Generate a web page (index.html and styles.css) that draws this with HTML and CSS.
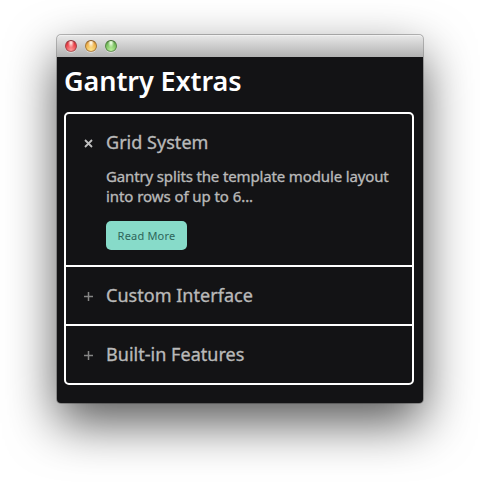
FILE: index.html
```html
<!DOCTYPE html>
<html lang="en">
<head>
<meta charset="utf-8">
<title>Gantry Extras</title>
<link rel="stylesheet" href="styles.css">
</head>
<body>
<main class="window">
  <header class="titlebar">
    <span class="light red"></span>
    <span class="light amber"></span>
    <span class="light green"></span>
  </header>
  <section class="content">
    <h1 class="title">Gantry Extras</h1>
    <div class="accordion">
      <article class="item open">
        <svg class="icon" viewBox="0 0 11 11"><path d="M2 2 9 9M9 2 2 9"/></svg>
        <div class="body">
          <h2 class="heading">Grid System</h2>
          <p class="text">Gantry splits the template module layout<br>into rows of up to 6...</p>
          <a class="button">Read More</a>
        </div>
      </article>
      <article class="item">
        <svg class="icon" viewBox="0 0 11 11"><path d="M5.5 1V10M1 5.5H10"/></svg>
        <h2 class="heading">Custom Interface</h2>
      </article>
      <article class="item">
        <svg class="icon" viewBox="0 0 11 11"><path d="M5.5 1V10M1 5.5H10"/></svg>
        <h2 class="heading">Built-in Features</h2>
      </article>
    </div>
  </section>
</main>
</body>
</html>
```
FILE: styles.css
```css
* { box-sizing: border-box; }
html { background: #fff; overflow: hidden; }
body {
  margin: 0;
  height: 482px;
  padding: 35px 57px 0;
  font-family: "Noto Sans", "Open Sans", sans-serif;
  overflow: hidden;
}
h1, h2, p { margin: 0; }
.window {
  width: 366px;
  height: 368px;
  border-radius: 4px;
  background: #131315;
  box-shadow: 0 0 0 1px rgba(0, 0, 0, .25), 0 20px 50px rgba(0, 0, 0, .66);
}
.titlebar {
  display: flex;
  gap: 8px;
  height: 22px;
  padding: 5px 8px;
  border-radius: 4px 4px 0 0;
  background: linear-gradient(#e9e9e9, #d8d8d8 30%, #b1b1b1);
  box-shadow: inset 0 1px 0 #f1f1f1;
}
.light {
  width: 12px;
  height: 12px;
  border-radius: 50%;
  border: 1px solid;
  box-shadow: 0 1px 0 rgba(255, 255, 255, .4);
}
.red {
  border-color: #8b3035 #a44348 #b86062;
  background: radial-gradient(ellipse at 50% 18%, #ffd5d2 0 10%, transparent 45%), radial-gradient(circle at 50% 90%, #ff9b98, #e93c45 65%, #b52d36);
}
.amber {
  border-color: #8b5d28 #a77936 #b88c51;
  background: radial-gradient(ellipse at 50% 18%, #fff2d9 0 10%, transparent 45%), radial-gradient(circle at 50% 90%, #ffe68c, #efb04a 65%, #b97829);
}
.green {
  border-color: #426d30 #568845 #709b60;
  background: radial-gradient(ellipse at 50% 18%, #e0f8d4 0 10%, transparent 45%), radial-gradient(circle at 50% 90%, #baf29a, #76bd5d 65%, #4f863e);
}
.content { padding: 0 9px 0 7px; }
.title {
  height: 55px;
  padding-top: 6px;
  color: #fff;
  font-size: 27px;
  font-weight: 600;
  line-height: 36px;
  letter-spacing: -.08px;
}
.accordion { border: 2px solid #fff; border-radius: 5px; }
.item {
  display: flex;
  gap: 12px;
  height: 57px;
  padding: 16px 17px 0;
  color: #b9b9b9;
}
.item.open { height: 151px; }
.item + .item { height: 59px; border-top: 2px solid #fff; }
.icon {
  flex: none;
  width: 11px;
  height: 11px;
  margin-top: 8px;
  fill: none;
  stroke: #858585;
  stroke-width: 1.5;
}
.open .icon { stroke: #c0c0c0; stroke-width: 1.8; }
.heading {
  font-size: 18px;
  font-weight: 400;
  line-height: 24px;
  letter-spacing: .03px;
  -webkit-text-stroke: .35px;
}
.text {
  margin-top: 12px;
  font-size: 15px;
  line-height: 20px;
  letter-spacing: -.07px;
  white-space: nowrap;
  -webkit-text-stroke: .35px;
}
.text::first-line { letter-spacing: -.14px; }
.button {
  display: block;
  width: 81px;
  height: 29px;
  margin-top: 15px;
  border-radius: 5px;
  background: #87dbc9;
  color: #2d655a;
  font-size: 11px;
  line-height: 29px;
  letter-spacing: .2px;
  text-align: center;
}
```
